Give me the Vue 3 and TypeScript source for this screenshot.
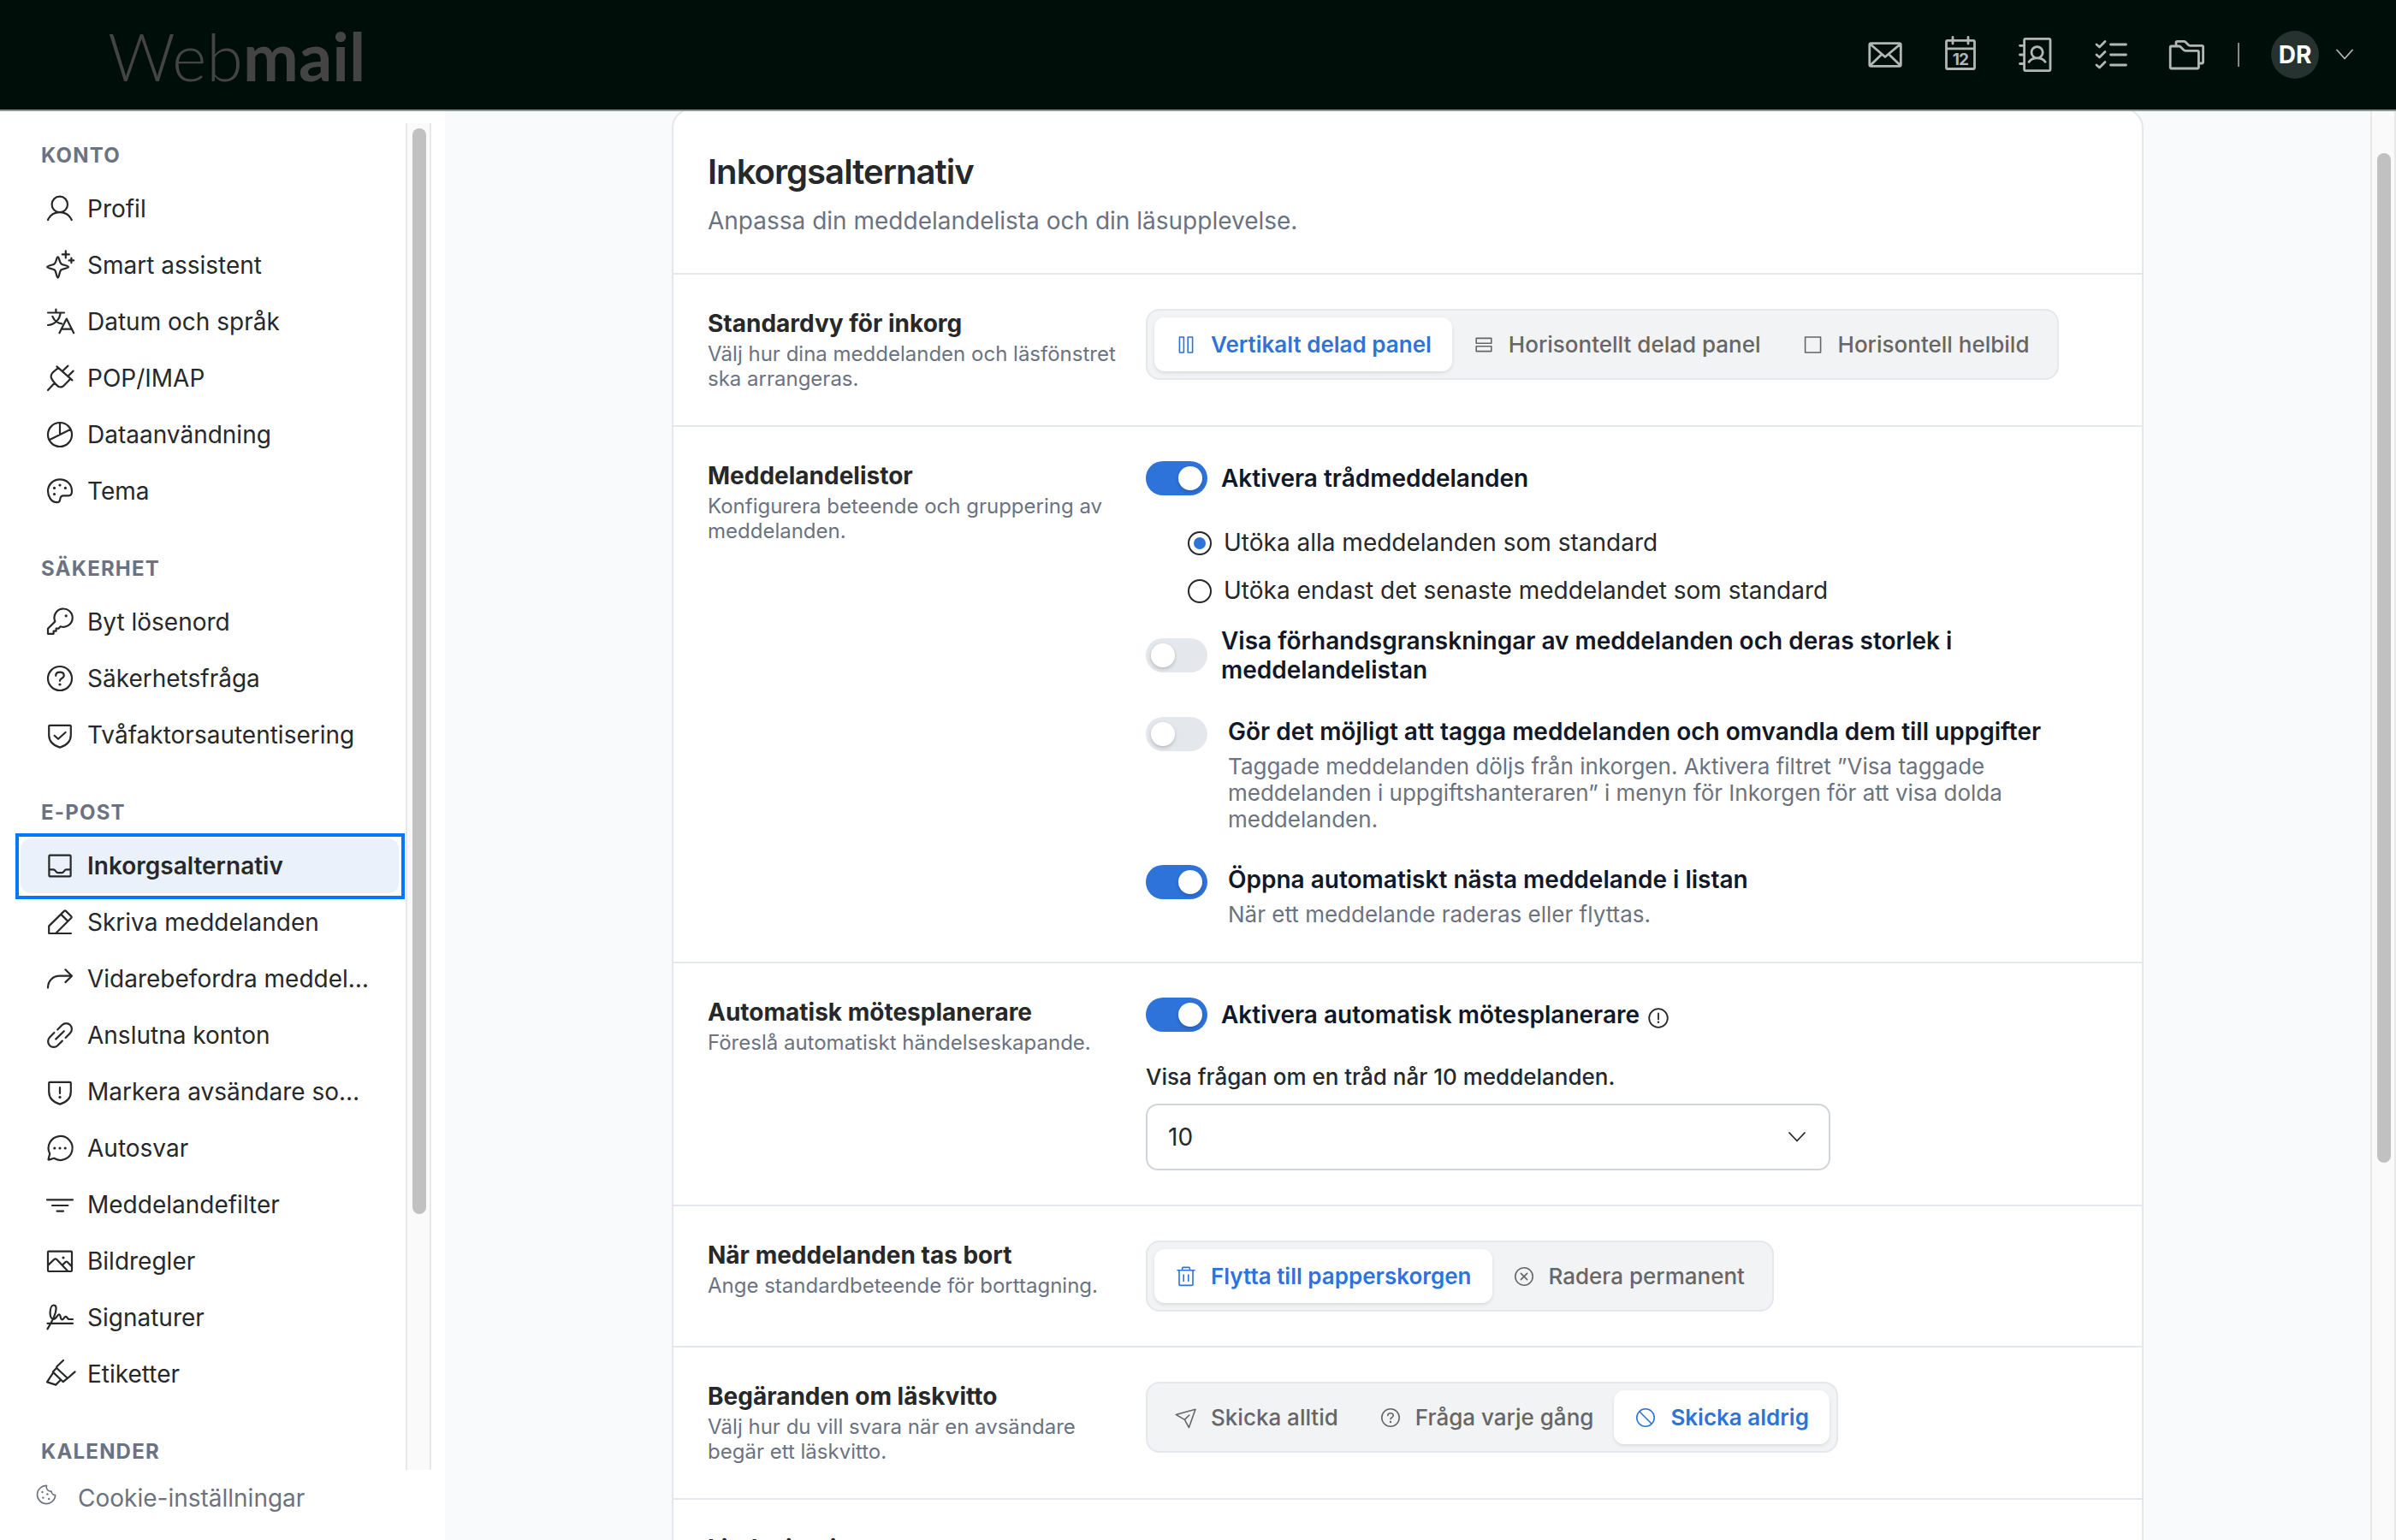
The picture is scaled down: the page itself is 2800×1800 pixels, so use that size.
<script setup lang="ts">
interface Glyph {
  d: string
  dots?: [number, number][]
}
interface MenuItem {
  label: string
  icon: Glyph
  active?: boolean
}
interface MenuGroup {
  title: string
  items: MenuItem[]
}
interface Option {
  label: string
  icon: Glyph
  active?: boolean
}

const ring = 'M2 16a14 14 0 1 0 28 0a14 14 0 1 0-28 0z'
const smallRing = 'M2.8 13a10.2 10.2 0 1 0 20.4 0a10.2 10.2 0 1 0-20.4 0z'
const shield = 'M4.2 4.8H27.8Q28.8 4.8 28.8 5.8V16C28.8 24.5 22 28.8 16 30.6C10 28.8 3.2 24.5 3.2 16V5.8Q3.2 4.8 4.2 4.8Z'

const groups: MenuGroup[] = [
  {
    title: 'KONTO',
    items: [
      { label: 'Profil', icon: { d: 'M6.6 10.9a9.2 9.2 0 1 0 18.4 0a9.2 9.2 0 1 0-18.4 0zM2 29C4.5 23.3 9.5 20.1 15.8 20.1S27.2 23.3 29.7 29' } },
      { label: 'Smart assistent', icon: { d: 'M13.6 6.4C15.2 6.4 15.3 12.6 17.5 14.4C19.5 16 26 16.4 26 18C26 19.6 19.5 19.8 17.5 21.4C15.3 23.2 15.2 30.6 13.6 30.6C12 30.6 11.9 23.2 9.7 21.4C7.7 19.8 1.2 19.6 1.2 18C1.2 16.4 7.7 16 9.7 14.4C11.9 12.6 12 6.4 13.6 6.4ZM22.8-.6V7.4M18.8 3.4H26.8M29.4 7.6V13.2M26.6 10.4H32.2' } },
      { label: 'Datum och språk', icon: { d: 'M2 5.5H21M11.4 1.5V5.5M16.6 5.8C16 13 10 19.5 2 20M7.4 9.8C9.2 14.2 13.5 17.6 18.2 18.4M15.4 29.2L23.8 12.6L32.2 29.2M18 24.6H29.8' } },
      { label: 'POP/IMAP', icon: { d: 'M2 30L9.4 22M12.4 2.4L30.4 18.4M14 4L7.6 9.4Q4.6 12.6 6.2 16.4Q10 23 14.6 26Q17.6 27.2 20.6 24.8L28.4 16.8M19.6 7.2L25.4 1.6M26 13.2L31.6 7.6' } },
      { label: 'Dataanvändning', icon: { d: ring + 'M16 2V16M3.5 22.3L28.6 9.8' } },
      { label: 'Tema', icon: { d: 'M16 2.4C8 2.4 2 8.4 2 16C2 22.4 6 29.2 12.6 29.2C19 29.2 13.6 21.4 20 21.4H26.2C29 21.4 30 19 30 16C30 8 24 2.4 16 2.4Z', dots: [[9.5, 12.4], [16, 9], [22.4, 12.4], [9.5, 19.6]] } },
    ],
  },
  {
    title: 'SÄKERHET',
    items: [
      { label: 'Byt lösenord', icon: { d: 'M10.4 15.4A10.6 10.6 0 1 1 16.8 21.2L14.4 23.6H11.6V26.6H8.6V29.8H2V23.8Z', dots: [[23.2, 8.8]] } },
      { label: 'Säkerhetsfråga', icon: { d: ring + 'M11.2 12.8C11.2 10 13.2 8.7 16 8.7S20.8 10.2 20.8 12.8C20.8 16 16 15.6 16 18.8', dots: [[16, 23]] } },
      { label: 'Tvåfaktorsautentisering', icon: { d: shield + 'M9.6 16.8L14 20.8L22.6 13' } },
    ],
  },
  {
    title: 'E-POST',
    items: [
      { label: 'Inkorgsalternativ', active: true, icon: { d: 'M4.5 3.6H27.5Q28.6 3.6 28.6 4.7V27.3Q28.6 28.4 27.5 28.4H4.5Q3.4 28.4 3.4 27.3V4.7Q3.4 3.6 4.5 3.6ZM3.4 20.4H8.6C11 20.4 11 24.2 14 24.2H18C21 24.2 21 20.4 23.4 20.4H28.6' } },
      { label: 'Skriva meddelanden', icon: { d: 'M29 29H3.2V20.4L21.2 2.6Q22 2 22.8 2.6L29.4 9.2Q30 10 29.4 10.8L11.4 28.8M17.2 6.6L25.2 14.6' } },
      { label: 'Vidarebefordra meddel…', icon: { d: 'M2 26.6C2 18 8 12.7 16 12.7H30M22.4 5.3L30 12.7L22.4 20.1' } },
      { label: 'Anslutna konton', icon: { d: 'M11.2 20.6L20.8 11.2M13.2 9.5L18.6 4C21.2 1.5 25.5 1.5 28 4C30.5 6.5 30.5 10.9 28 13.5L22.6 19M9.4 13L4 18.5C1.5 21.1 1.5 25.5 4 28C6.5 30.5 10.8 30.5 13.4 28L18.8 22.6' } },
      { label: 'Markera avsändare so…', icon: { d: shield + 'M16 11V18', dots: [[16, 22.4]] } },
      { label: 'Autosvar', icon: { d: 'M4.2 22.4A14 14 0 1 1 9.2 27.8L3 29.6Q2.4 29.6 2.6 28.8Z', dots: [[9.8, 16], [16, 16], [22.2, 16]] } },
      { label: 'Meddelandefilter', icon: { d: 'M1 10.3H31M7 17H25.4M12.6 23.7H20' } },
      { label: 'Bildregler', icon: { d: 'M3 4.6H29Q30 4.6 30 5.6V27Q30 28 29 28H3Q2 28 2 27V5.6Q2 4.6 3 4.6ZM2.4 20.6L9.6 13.8Q10.8 13 12 13.8L25 27.6M19 20.6L22.6 17Q23.6 16.4 24.6 17L30 22.4', dots: [[20, 12]] } },
      { label: 'Signaturer', icon: { d: 'M1.5 29.4C6 22 11.6 11 11.6 5.5C11.6 2.8 10.4 1.5 8.9 1.5C6 1.5 4.6 6 4.6 10.5C4.6 14.8 6 18 8.6 18C11.8 18 13 12.4 15 12.4C17.2 12.4 16.4 18.4 18.5 18.4C20.6 18.4 21.2 14.6 22.8 14.8C24.8 15 24.6 18 27 18H31M1.5 22.8H31' } },
      { label: 'Etiketter', icon: { d: 'M20 0L12.4 7.2V9.2L25 21L33.6 13.4M12.2 8.8L7.8 13.6L19.8 25.2L25.2 20.6M8.2 14.4L1 25.4L11.2 28.6L17 22.8' } },
    ],
  },
  { title: 'KALENDER', items: [] },
]

const viewOptions: Option[] = [
  { label: 'Vertikalt delad panel', active: true, icon: { d: 'M5.4 4H10.4V22H5.4ZM15.2 4H20.6V22H15.2Z' } },
  { label: 'Horisontellt delad panel', icon: { d: 'M4.2 5.4H21.8V11.2H4.2ZM4.2 14.8H21.8V20.6H4.2Z' } },
  { label: 'Horisontell helbild', icon: { d: 'M3.6 4H21.6V22H3.6Z' } },
]
const deleteOptions: Option[] = [
  { label: 'Flytta till papperskorgen', active: true, icon: { d: 'M3 5.8H23M8.6 5.8V3.6Q8.6 2.4 9.8 2.4H16.2Q17.4 2.4 17.4 3.6V5.8M5 5.8V22.4Q5 23.4 6 23.4H20Q21 23.4 21 22.4V5.8M10.2 11V18.4M15.8 11V18.4' } },
  { label: 'Radera permanent', icon: { d: smallRing + 'M9.4 9.4L16.6 16.6M16.6 9.4L9.4 16.6' } },
]
const receiptOptions: Option[] = [
  { label: 'Skicka alltid', icon: { d: 'M1.2 9.4L24 3.2L16.4 24.6L11.4 15.4ZM11.4 15.4L16.8 10' } },
  { label: 'Fråga varje gång', icon: { d: smallRing + 'M9.8 10.6C9.8 8.8 11 7.8 13 7.8S16.2 9 16.2 10.6C16.2 12.8 13 12.6 13 14.8', dots: [[13, 18]] } },
  { label: 'Skicka aldrig', active: true, icon: { d: smallRing + 'M5.8 5.8L20.2 20.2' } },
]
const segments = { view: viewOptions, del: deleteOptions, receipt: receiptOptions }
</script>

<template>
  <div class="app">
    <header class="topbar">
      <div class="logo"><span class="logo-light">Web</span><span class="logo-bold">mail</span></div>
      <div class="tools">
        <svg class="tool" viewBox="0 0 48 48"><path d="M7.5 10.6H40.5Q42.3 10.6 42.3 12.4V35.6Q42.3 37.4 40.5 37.4H7.5Q5.8 37.4 5.8 35.6V12.4Q5.8 10.6 7.5 10.6ZM6.5 11.5L24 26.5L41.8 11.5M6.5 36.5L20 23.5M41.8 36.5L28.4 23.5" /></svg>
        <svg class="tool" viewBox="0 0 48 48"><path d="M9 7.4H39Q40.5 7.4 40.5 9V39Q40.5 40.5 39 40.5H9Q7.5 40.5 7.5 39V9Q7.5 7.4 9 7.4ZM7.5 16.8H40.5M15 3.5V11M33 3.5V11" /><text x="24" y="36" text-anchor="middle">12</text></svg>
        <svg class="tool" viewBox="0 0 48 48"><path d="M12 5.4H39.5Q41 5.4 41 7V41Q41 42.6 39.5 42.6H12Q10.6 42.6 10.6 41V7Q10.6 5.4 12 5.4ZM5.5 13.3H10M5.5 24H10M5.5 34.5H10M19 21.2a6.600 6.600 0 1 0 13.2 0a6.600 6.600 0 1 0-13.2 0zM16 32.4C18 29.2 21.5 27.8 25.6 27.8S33.2 29.2 35.2 32.4" /></svg>
        <svg class="tool" viewBox="0 0 48 48"><path d="M7 12L10.5 15L17 8.4M7 24L10.5 27L17 20.4M7 36L10.5 39L17 32.4M23.5 12H41.5M23.5 24H41.5M23.5 36H41.5" /></svg>
        <svg class="tool" viewBox="0 0 48 48"><path d="M6.5 14H15.5Q16.5 14 17.2 14.8L21 18.6Q21.7 19.3 22.7 19.3H37Q38.4 19.3 38.4 20.7V38.6Q38.4 40 37 40H6.5Q5.2 40 5.2 38.6V15.4Q5.2 14 6.5 14ZM12 13.5V9.8Q12 8.4 13.4 8.4H21.2Q22.2 8.4 22.9 9.1L26.4 12.6Q27.1 13.3 28.1 13.3H42.2Q43.6 13.3 43.6 14.7V32.6Q43.6 34 42.2 34H38.6" /></svg>
      </div>
      <span class="sep"></span>
      <span class="avatar">DR</span>
      <svg class="caret" viewBox="0 0 20 14"><path d="M1 1.5L10 11.5L19 1.5" /></svg>
    </header>

    <div class="body">
      <aside class="sidebar">
        <div class="nav-wrap">
          <nav class="nav">
            <section v-for="g in groups" :key="g.title" class="group">
              <h2>{{ g.title }}</h2>
              <a v-for="item in g.items" :key="item.label" class="item" :class="{ active: item.active }">
                <svg class="item-icon" viewBox="0 0 32 32">
                  <path :d="item.icon.d" />
                  <circle v-for="(p, i) in item.icon.dots" :key="i" :cx="p[0]" :cy="p[1]" r="1.6" />
                </svg>
                <span>{{ item.label }}</span>
              </a>
            </section>
          </nav>
          <div class="track side-track"><div class="thumb side-thumb"></div></div>
        </div>
        <div class="cookie">
          <svg viewBox="0 0 24 24">
            <path d="M12.5 1.4A10.6 10.6 0 1 0 22.7 12.5A4.6 4.6 0 0 1 18 8A5 5 0 0 1 12.5 1.4Z" />
            <circle cx="7.5" cy="9" r="1.2" /><circle cx="13.4" cy="11.4" r="1.2" /><circle cx="8.4" cy="15.6" r="1.2" /><circle cx="15.2" cy="17" r="1.2" />
          </svg>
          <span>Cookie-inställningar</span>
        </div>
      </aside>

      <main class="main">
        <div class="card">
          <div class="card-head">
            <h1>Inkorgsalternativ</h1>
            <p>Anpassa din meddelandelista och din läsupplevelse.</p>
          </div>

          <div class="row">
            <div class="info">
              <h3>Standardvy för inkorg</h3>
              <p>Välj hur dina meddelanden och läsfönstret ska arrangeras.</p>
            </div>
            <div class="control">
              <div class="segment">
                <button v-for="o in segments.view" :key="o.label" :class="{ on: o.active }">
                  <svg viewBox="0 0 26 26"><path :d="o.icon.d" /></svg>{{ o.label }}
                </button>
              </div>
            </div>
          </div>

          <div class="row">
            <div class="info">
              <h3>Meddelandelistor</h3>
              <p>Konfigurera beteende och gruppering av meddelanden.</p>
            </div>
            <div class="control">
              <div class="switch-row">
                <span class="switch on"></span>
                <span class="switch-label">Aktivera trådmeddelanden</span>
              </div>
              <div class="radios">
                <label class="radio"><span class="dot checked"></span><span class="radio-text">Utöka alla meddelanden som standard</span></label>
                <label class="radio"><span class="dot"></span><span class="radio-text">Utöka endast det senaste meddelandet som standard</span></label>
              </div>
              <div class="switch-row">
                <span class="switch"></span>
                <span class="switch-label narrow">Visa förhandsgranskningar av meddelanden och deras storlek i meddelandelistan</span>
              </div>
              <div class="switch-row detailed">
                <span class="switch"></span>
                <div>
                  <div class="switch-label">Gör det möjligt att tagga meddelanden och omvandla dem till uppgifter</div>
                  <p>Taggade meddelanden döljs från inkorgen. Aktivera filtret ”Visa taggade meddelanden i uppgiftshanteraren” i menyn för Inkorgen för att visa dolda meddelanden.</p>
                </div>
              </div>
              <div class="switch-row detailed">
                <span class="switch on"></span>
                <div>
                  <div class="switch-label">Öppna automatiskt nästa meddelande i listan</div>
                  <p>När ett meddelande raderas eller flyttas.</p>
                </div>
              </div>
            </div>
          </div>

          <div class="row">
            <div class="info">
              <h3>Automatisk mötesplanerare</h3>
              <p>Föreslå automatiskt händelseskapande.</p>
            </div>
            <div class="control">
              <div class="switch-row">
                <span class="switch on"></span>
                <span class="switch-label">Aktivera automatisk mötesplanerare</span>
                <svg class="hint" viewBox="0 0 24 24">
                  <circle class="hint-ring" cx="12" cy="12" r="10.8" /><path d="M12 6.4V13.4" /><circle cx="12" cy="16.8" r="1.2" />
                </svg>
              </div>
              <div class="field-label">Visa frågan om en tråd når 10 meddelanden.</div>
              <div class="select">
                <span>10</span>
                <svg viewBox="0 0 20 12"><path d="M1 1L10 10.5L19 1" /></svg>
              </div>
            </div>
          </div>

          <div class="row">
            <div class="info">
              <h3>När meddelanden tas bort</h3>
              <p>Ange standardbeteende för borttagning.</p>
            </div>
            <div class="control">
              <div class="segment">
                <button v-for="o in segments.del" :key="o.label" :class="{ on: o.active }">
                  <svg viewBox="0 0 26 26"><path :d="o.icon.d" /></svg>{{ o.label }}
                </button>
              </div>
            </div>
          </div>

          <div class="row">
            <div class="info">
              <h3>Begäranden om läskvitto</h3>
              <p>Välj hur du vill svara när en avsändare begär ett läskvitto.</p>
            </div>
            <div class="control">
              <div class="segment">
                <button v-for="o in segments.receipt" :key="o.label" :class="{ on: o.active }">
                  <svg viewBox="0 0 26 26"><path :d="o.icon.d" /><circle v-for="(p, i) in o.icon.dots" :key="i" :cx="p[0]" :cy="p[1]" r="1.2" /></svg>{{ o.label }}
                </button>
              </div>
            </div>
          </div>

          <div class="row">
            <div class="info">
              <h3>Ljudaviseringar</h3>
            </div>
            <div class="control"></div>
          </div>
        </div>
      </main>
      <div class="track main-track"><div class="thumb main-thumb"></div></div>
    </div>
  </div>
</template>

<style>
body {
  margin: 0;
  overflow: hidden;
}
</style>

<style scoped>
.app {
  width: 2800px;
  height: 1800px;
  display: flex;
  flex-direction: column;
  overflow: hidden;
  background: #f9fafc;
  color: #262829;
  font-family: Inter, "Liberation Sans", sans-serif;
  font-size: 28px;
  line-height: 34px;
}
h1,
h2,
h3,
p {
  margin: 0;
}
svg {
  flex: none;
  fill: none;
  stroke: currentColor;
  stroke-linecap: round;
  stroke-linejoin: round;
  overflow: visible;
}
svg circle {
  fill: currentColor;
  stroke: none;
}

/* top bar */
.topbar {
  position: relative;
  z-index: 1;
  flex: none;
  box-sizing: border-box;
  height: 130px;
  border-bottom: 2px solid #8d9391;
  background: #000e0a;
  display: flex;
  align-items: center;
  padding: 0 50px 0 126px;
}
.logo {
  flex: 1;
  font-family: Lato, sans-serif;
  font-size: 77.5px;
  line-height: 93px;
  color: #444444;
  white-space: nowrap;
  padding-top: 2px;
}
.logo-light {
  font-weight: 300;
}
.logo-bold {
  font-weight: 700;
}
.tools {
  display: flex;
  gap: 40px;
  color: #b2b7b5;
}
.tool {
  width: 48px;
  height: 48px;
  stroke-width: 2.8;
}
.tool text {
  fill: currentColor;
  stroke: none;
  font-size: 19px;
  font-weight: 700;
  letter-spacing: -0.8px;
}
.sep {
  width: 2px;
  height: 28px;
  margin: 0 37px 0 36px;
  background: #858a89;
}
.avatar {
  width: 56px;
  height: 56px;
  border-radius: 50%;
  background: #26322f;
  color: #ffffff;
  font-weight: 700;
  display: flex;
  align-items: center;
  justify-content: center;
}
.caret {
  width: 20px;
  height: 14px;
  margin-left: 20px;
  stroke-width: 1.8;
  color: #b2b7b5;
}

/* layout */
.body {
  flex: 1;
  min-height: 0;
  display: flex;
}
.sidebar {
  width: 520px;
  flex: none;
  background: #ffffff;
  display: flex;
  flex-direction: column;
  padding-top: 14px;
  box-sizing: border-box;
}
.nav-wrap {
  flex: none;
  height: 1574px;
  display: flex;
}
.nav {
  width: 474px;
  padding: 22px 0 0 24px;
  box-sizing: border-box;
  overflow: hidden;
}
.group {
  margin-bottom: 43px;
}
.group h2 {
  margin: 0 0 14px 24px;
  font-size: 24px;
  line-height: 32px;
  font-weight: 700;
  letter-spacing: 1.2px;
  color: #6b7280;
}
.item {
  display: flex;
  align-items: center;
  gap: 16px;
  width: 442px;
  height: 64px;
  margin-bottom: 2px;
  padding-left: 30px;
  box-sizing: border-box;
  border-radius: 12px;
  white-space: nowrap;
}
.item:last-child {
  margin-bottom: 0;
}
.item-icon {
  width: 32px;
  height: 32px;
  stroke-width: 2.2;
}
.item.active {
  position: relative;
  background: #eaf1fb;
  font-weight: 600;
}
.item.active::after {
  content: "";
  position: absolute;
  inset: -6px -7px -7px -6px;
  border: 4px solid #0078ff;
}
.cookie {
  display: flex;
  align-items: center;
  height: 66px;
  padding-left: 42px;
  color: #6b7280;
}
.cookie svg {
  width: 24px;
  height: 24px;
  margin: 0 25px 8px 0;
  stroke-width: 1.6;
}

/* scrollbars */
.track {
  box-sizing: border-box;
  background: #fafafa;
  border: solid #e8e8e8;
  border-width: 0 2px;
}
.thumb {
  width: 16px;
  border-radius: 8px;
  background: #c1c1c1;
}
.side-track {
  width: 30px;
  padding: 6px 0 0 6px;
}
.side-thumb {
  height: 1269px;
}
.main-track {
  flex: none;
  width: 30px;
  padding: 49px 0 0 6px;
}
.main-thumb {
  height: 1180px;
}

/* settings card */
.main {
  flex: 1;
  padding-left: 265px;
}
.card {
  width: 1720px;
  height: 1900px;
  box-sizing: border-box;
  margin-top: -4px;
  border: 2px solid #e4e7ec;
  border-radius: 24px;
  background: #ffffff;
}
.card-head {
  padding: 49px 40px 44px;
  color: #6b7280;
}
.card-head h1 {
  margin-bottom: 16px;
  font-size: 40px;
  line-height: 48px;
  font-weight: 600;
  letter-spacing: -0.95px;
  color: #262829;
}
.row {
  border-top: 2px solid #e4e7ec;
  padding: 40px;
  display: flex;
}
.info {
  width: 512px;
  flex: none;
}
.info h3 {
  font-size: 28px;
  line-height: 34px;
  font-weight: 700;
  margin-bottom: 4px;
}
.info p {
  width: 490px;
  font-size: 24px;
  line-height: 29px;
  color: #6b7280;
}
.control {
  width: 1066px;
}
.segment {
  display: inline-flex;
  box-sizing: border-box;
  height: 83px;
  padding: 8px;
  border: 2px solid #e4e7ec;
  border-radius: 16px;
  background: #f2f3f5;
  vertical-align: top;
}
.segment button {
  display: flex;
  align-items: center;
  gap: 16px;
  border: 0;
  margin: 0;
  padding: 0 24px;
  border-radius: 12px;
  background: none;
  color: #666666;
  font: 500 26px/31px Inter, "Liberation Sans", sans-serif;
  white-space: nowrap;
}
.segment button.on {
  background: #ffffff;
  color: #2e73d9;
  font-weight: 600;
  box-shadow: 0 2px 4px rgba(0, 0, 0, 0.1);
}
.segment svg {
  width: 26px;
  height: 26px;
  stroke-width: 1.6;
}
.switch-row {
  display: flex;
  align-items: center;
  gap: 16px;
}
.switch {
  flex: none;
  width: 72px;
  height: 40px;
  padding: 6px;
  box-sizing: border-box;
  border-radius: 20px;
  background: #e4e7eb;
}
.switch::after {
  content: "";
  display: block;
  width: 28px;
  height: 28px;
  border-radius: 50%;
  background: #ffffff;
  box-shadow: 0 2px 4px rgba(0, 0, 0, 0.2);
}
.switch.on {
  background: #2e73d9;
}
.switch.on::after {
  margin-left: auto;
}
.switch-label {
  font-weight: 600;
  color: #111827;
}
.switch-label.narrow {
  width: 900px;
}
.radios {
  display: flex;
  flex-direction: column;
  gap: 22px;
  padding: 38px 0 25px 49px;
}
.radio {
  display: flex;
  align-items: center;
  gap: 14px;
}
.radio-text {
  padding-bottom: 2px;
  margin-bottom: -2px;
}
.radio .dot {
  margin-top: 1px;
}
.dot {
  width: 28px;
  height: 28px;
  box-sizing: border-box;
  border: 2px solid #262829;
  border-radius: 50%;
  padding: 5px;
}
.dot.checked::after {
  content: "";
  display: block;
  width: 14px;
  height: 14px;
  border-radius: 50%;
  background: #2e73d9;
}
.detailed {
  align-items: flex-start;
  gap: 24px;
  margin-top: 38px;
}
.detailed p {
  width: 930px;
  margin-top: 8px;
  font-size: 26px;
  line-height: 31px;
  color: #6b7280;
}
.hint {
  width: 24px;
  height: 24px;
  margin: 8px 0 0 -6px;
  stroke-width: 1.8;
}
.hint .hint-ring {
  fill: none;
  stroke: currentColor;
}
.field-label {
  margin: 37px 0 15px;
  font-size: 26px;
  line-height: 32px;
  font-weight: 500;
}
.select {
  width: 800px;
  height: 78px;
  box-sizing: border-box;
  display: flex;
  align-items: center;
  justify-content: space-between;
  padding: 0 27px 0 24px;
  border: 2px solid #d1d5db;
  border-radius: 14px;
}
.select svg {
  width: 20px;
  height: 12px;
  stroke-width: 1.8;
}
</style>
